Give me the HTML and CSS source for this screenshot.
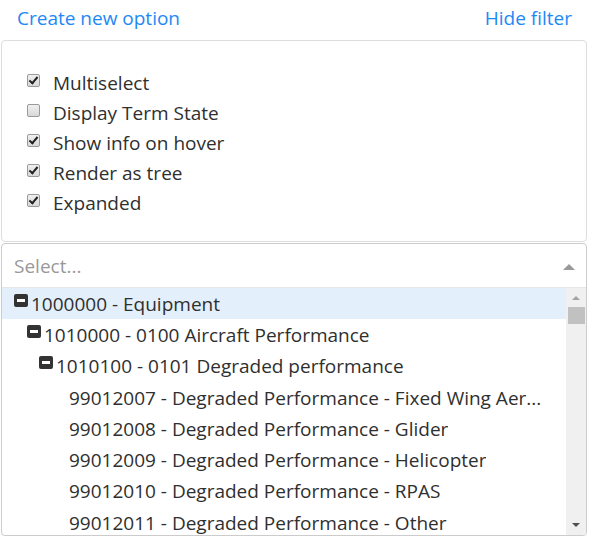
FILE: index.html
```html
<!DOCTYPE html>
<html>
<head>
<meta charset="utf-8">
<link rel="stylesheet" href="styles.css">
</head>
<body>
<div class="wrap">
  <div class="top">
    <a class="link" href="#">Create new option</a>
    <a class="link" href="#">Hide filter</a>
  </div>
  <div class="panel">
    <label class="check"><span class="box on"></span>Multiselect</label>
    <label class="check"><span class="box"></span>Display Term State</label>
    <label class="check"><span class="box on"></span>Show info on hover</label>
    <label class="check"><span class="box on"></span>Render as tree</label>
    <label class="check"><span class="box on"></span>Expanded</label>
  </div>
  <div class="select">
    <div class="control">
      <span class="placeholder">Select...</span>
      <span class="arrow"></span>
    </div>
    <div class="menu">
      <div class="list">
        <div class="row active l0"><span class="tog"></span><span class="txt">1000000 - Equipment</span></div>
        <div class="row l1"><span class="tog"></span><span class="txt">1010000 - 0100 Aircraft Performance</span></div>
        <div class="row l2"><span class="tog"></span><span class="txt">1010100 - 0101 Degraded performance</span></div>
        <div class="row l3"><span class="tog leaf"></span><span class="txt">99012007 - Degraded Performance - Fixed Wing Aer...</span></div>
        <div class="row l3"><span class="tog leaf"></span><span class="txt">99012008 - Degraded Performance - Glider</span></div>
        <div class="row l3"><span class="tog leaf"></span><span class="txt">99012009 - Degraded Performance - Helicopter</span></div>
        <div class="row l3"><span class="tog leaf"></span><span class="txt">99012010 - Degraded Performance - RPAS</span></div>
        <div class="row l3"><span class="tog leaf"></span><span class="txt">99012011 - Degraded Performance - Other</span></div>
      </div>
      <div class="scrollbar">
        <span class="sb-up"></span>
        <span class="sb-track"><span class="sb-thumb"></span></span>
        <span class="sb-down"></span>
      </div>
    </div>
  </div>
</div>
</body>
</html>
```

FILE: styles.css
```css
html, body {
  margin: 0;
  padding: 0;
  background: #fff;
}
body {
  font-family: "Open Sans", "Noto Sans", sans-serif;
  font-size: 19px;
  color: #2f2f2f;
}
.wrap {
  width: 586px;
  margin-left: 1px;
}
.top {
  display: flex;
  justify-content: space-between;
  height: 40px;
  align-items: flex-start;
  padding: 4px 15px 0 16px;
  box-sizing: border-box;
}
.link {
  color: #1e88f5;
  text-decoration: none;
  font-size: 19px;
  line-height: 28px;
}
.panel {
  border: 1px solid #ddd;
  border-radius: 4px;
  padding: 27px 15px 22px 25px;
  display: flex;
  flex-direction: column;
  height: 202px;
  box-sizing: border-box;
}
.check {
  display: flex;
  align-items: center;
  height: 30px;
}
.box {
  width: 11px;
  height: 11px;
  border: 1px solid #9a9a9a;
  border-radius: 2px;
  background: linear-gradient(#f0f0f0, #d8d8d8);
  margin-right: 13px;
  position: relative;
  flex: none;
  margin-top: -5px;
}
.box.on::after {
  content: "";
  position: absolute;
  left: 3px;
  top: 0px;
  width: 3px;
  height: 7px;
  border: solid #222;
  border-width: 0 2px 2px 0;
  transform: rotate(40deg);
}
.select {
  border: 1px solid #ccc;
  border-radius: 4px;
  margin-top: 1px;
  overflow: hidden;
  box-shadow: 0 1px 1px rgba(0,0,0,0.06);
}
.control {
  height: 43px;
  display: flex;
  align-items: center;
  justify-content: space-between;
  padding: 0 11px 0 12px;
  border-bottom: 1px solid #e6e6e6;
}
.placeholder {
  color: #999;
}
.arrow {
  width: 0;
  height: 0;
  border-left: 6px solid transparent;
  border-right: 6px solid transparent;
  border-bottom: 6px solid #999;
  margin-top: 2px;
}
.menu {
  display: flex;
  height: 247px;
}
.list {
  flex: 1;
  overflow: hidden;
  min-width: 0;
}
.row {
  height: 31.3px;
  display: flex;
  align-items: center;
  white-space: nowrap;
  padding-right: 12px;
}
.row.active {
  background: #e3f0fc;
}
.l0 { padding-left: 12px; }
.l1 { padding-left: 25px; }
.l2 { padding-left: 37px; }
.l3 { padding-left: 50px; }
.tog {
  width: 14px;
  height: 13px;
  background: #333;
  border-radius: 2px;
  margin-right: 3px;
  flex: none;
  position: relative;
  margin-top: -7px;
}
.tog::after {
  content: "";
  position: absolute;
  left: 3px;
  right: 3px;
  top: 5px;
  height: 3px;
  background: #fff;
}
.tog.leaf {
  background: transparent;
}
.tog.leaf::after {
  display: none;
}
.txt {
  overflow: hidden;
  text-overflow: ellipsis;
  min-width: 0;
}
.scrollbar {
  width: 20px;
  flex: none;
  background: #f0f0f0;
  display: flex;
  flex-direction: column;
  align-items: center;
}
.sb-up, .sb-down {
  width: 0;
  height: 0;
  border-left: 4px solid transparent;
  border-right: 4px solid transparent;
  flex: none;
}
.sb-up {
  border-bottom: 4px solid #a3a3a3;
  margin-top: 8px;
}
.sb-down {
  border-top: 4px solid #505050;
  margin-bottom: 8px;
}
.sb-track {
  flex: 1;
  width: 100%;
  display: flex;
  justify-content: center;
}
.sb-thumb {
  width: 17px;
  height: 17px;
  background: #c1c1c1;
  margin-top: 7px;
}
```
